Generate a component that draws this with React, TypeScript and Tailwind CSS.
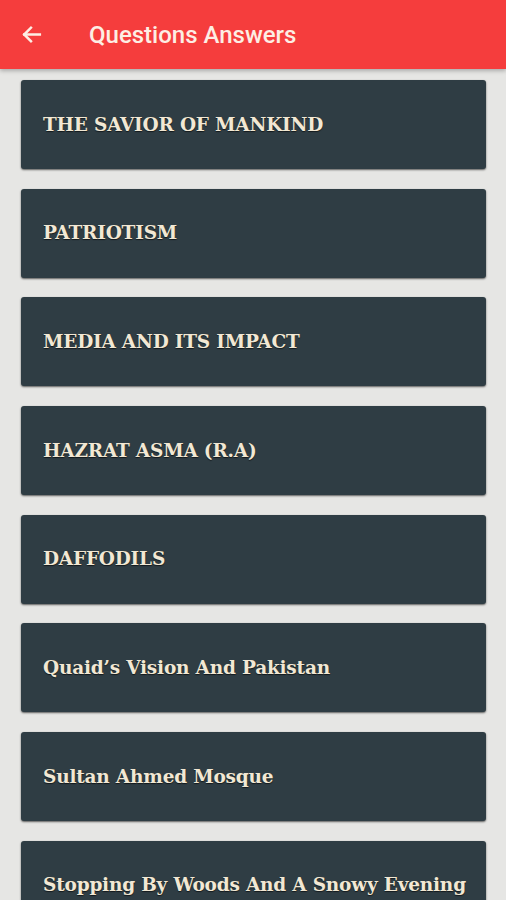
const TOPICS = [
  "THE SAVIOR OF MANKIND",
  "PATRIOTISM",
  "MEDIA AND ITS IMPACT",
  "HAZRAT ASMA (R.A)",
  "DAFFODILS",
  "Quaid’s Vision And Pakistan",
  "Sultan Ahmed Mosque",
  "Stopping By Woods And A Snowy Evening",
];

export default function App() {
  return (
    <div className="h-[900px] overflow-hidden bg-[#e6e6e4]">
      {/* Toolbar */}
      <div className="h-[69px] bg-[#f53d3d] flex items-center shadow-[0_2px_4px_rgba(0,0,0,0.25)] relative z-10">
        <div className="w-[62px] flex justify-center">
          <svg width="25" height="25" viewBox="0 0 24 24" fill="none" stroke="#fdeee4" strokeWidth="2.4" strokeLinecap="square">
            <path d="M20 12H5" />
            <path d="M11.5 5.5L5 12l6.5 6.5" />
          </svg>
        </div>
        <span className="ml-[27px] font-['Roboto',sans-serif] font-medium text-[24px] text-[#fdeee4]">
          Questions Answers
        </span>
      </div>

      {/* List */}
      <div className="flex flex-col gap-[19.7px] pl-[21px] pr-[20px] pt-[11px]">
        {TOPICS.map((t) => (
          <div
            key={t}
            className="h-[89px] shrink-0 rounded-[3px] bg-[#2f3d44] flex items-center pl-[22px] shadow-[0_1px_2px_rgba(0,0,0,0.6)]"
          >
            <span className="font-['DejaVu_Serif',serif] font-bold text-[18.5px] text-[#f2e8d4] tracking-[-0.2px] [text-shadow:0_1px_1px_rgba(0,0,0,0.6)]">
              {t}
            </span>
          </div>
        ))}
      </div>
    </div>
  );
}
